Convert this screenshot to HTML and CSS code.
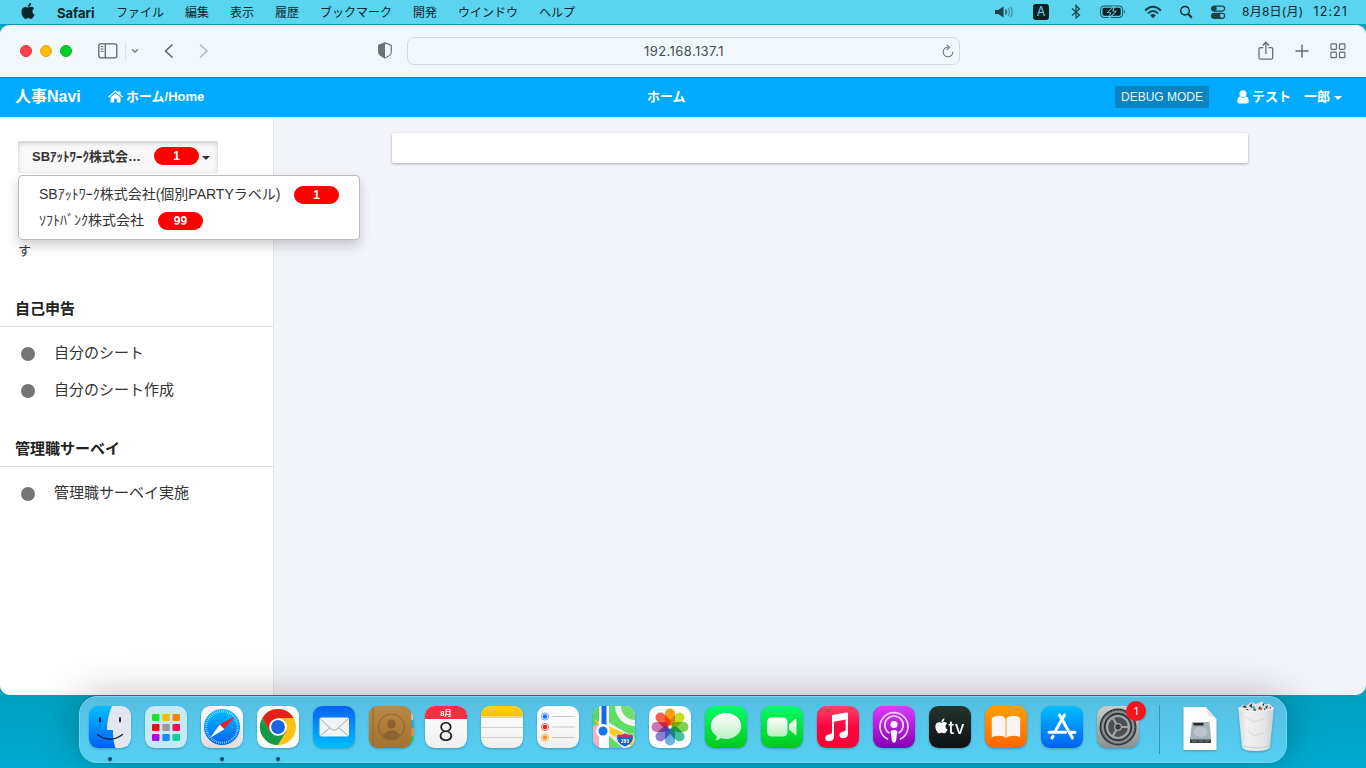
FILE: index.html
```html
<!DOCTYPE html>
<html lang="ja">
<head>
<meta charset="utf-8">
<title>ホーム</title>
<link rel="stylesheet" href="styles.css">
</head>
<body>
<svg class="defs" width="0" height="0">
  <defs>
    <linearGradient id="blue" x2="0" y2="1"><stop stop-color="#00bfff"/><stop offset="1" stop-color="#0060f4"/></linearGradient>
    <linearGradient id="mail" x2="0" y2="1"><stop stop-color="#0862f5"/><stop offset="1" stop-color="#00bdfd"/></linearGradient>
    <linearGradient id="green" x2="0" y2="1"><stop stop-color="#04fb68"/><stop offset="1" stop-color="#04c91c"/></linearGradient>
    <linearGradient id="light" x2="0" y2="1"><stop stop-color="#fff"/><stop offset="1" stop-color="#dcdcde"/></linearGradient>
    <linearGradient id="paper" x2="0" y2="1"><stop stop-color="#fff"/><stop offset="1" stop-color="#f0efee"/></linearGradient>
    <linearGradient id="bubble" x2="0" y2="1"><stop stop-color="#fff"/><stop offset="1" stop-color="#b9efc0"/></linearGradient>
    <linearGradient id="music" x2="0" y2="1"><stop stop-color="#fb4467"/><stop offset=".5" stop-color="#fc0440"/><stop offset="1" stop-color="#fc0034"/></linearGradient>
    <linearGradient id="purple" x2="0" y2="1"><stop stop-color="#dc3afb"/><stop offset="1" stop-color="#8400b4"/></linearGradient>
    <linearGradient id="black" x2="0" y2="1"><stop stop-color="#24352f"/><stop offset="1" stop-color="#0c1114"/></linearGradient>
    <linearGradient id="orange" x2="0" y2="1"><stop stop-color="#ff9f00"/><stop offset="1" stop-color="#ff6500"/></linearGradient>
    <linearGradient id="brown" x2="0" y2="1"><stop stop-color="#b98943"/><stop offset="1" stop-color="#a37131"/></linearGradient>
    <linearGradient id="steel" x2="0" y2="1"><stop stop-color="#c9cdce"/><stop offset="1" stop-color="#8c8f91"/></linearGradient>
    <linearGradient id="yellow" x2="0" y2="1"><stop stop-color="#ffd60a"/><stop offset="1" stop-color="#f8bd00"/></linearGradient>
    <linearGradient id="bin" x2="1" y2="0"><stop stop-color="#d3d8da"/><stop offset=".25" stop-color="#f1f1f2"/><stop offset=".75" stop-color="#e4e3e5"/><stop offset="1" stop-color="#c7ced2"/></linearGradient>
    <clipPath id="tile"><rect width="42" height="42" rx="9.500"/></clipPath>
    <path id="apple" d="M12.152 6.896c-.948 0-2.415-1.078-3.96-1.04-2.04.027-3.91 1.183-4.961 3.014-2.117 3.675-.546 9.103 1.519 12.09 1.013 1.454 2.208 3.09 3.792 3.039 1.52-.065 2.09-.987 3.935-.987 1.831 0 2.35.987 3.96.948 1.637-.026 2.676-1.48 3.676-2.948 1.156-1.688 1.636-3.325 1.662-3.415-.039-.013-3.182-1.221-3.22-4.857-.026-3.04 2.48-4.494 2.597-4.559-1.429-2.09-3.623-2.324-4.39-2.376-2-.156-3.675 1.09-4.61 1.09zM15.53 3.83c.843-1.012 1.4-2.427 1.245-3.83-1.207.052-2.662.805-3.532 1.818-.78.896-1.454 2.338-1.273 3.714 1.338.104 2.715-.688 3.559-1.701"/>
  </defs>
</svg>

<header class="menubar">
  <svg class="apple" width="16" height="16" viewBox="0 0 24 24"><use href="#apple"/></svg>
  <nav class="menus">
    <b class="app">Safari</b><span>ファイル</span><span>編集</span><span>表示</span><span>履歴</span><span>ブックマーク</span><span>開発</span><span>ウインドウ</span><span>ヘルプ</span>
  </nav>
  <div class="status">
    <svg width="20" height="16" viewBox="0 0 20 16"><path fill="#1d424a" d="M1 6h3.300L9.500 2.500v11L4.300 10H1z"/><g fill="none" stroke="#1d424a" stroke-width="1.200"><path d="M11.500 5.500q1.700 2.500 0 5"/><path opacity=".5" d="M14 4q2.700 4 0 8M16.500 2.700q3.400 5.300 0 10.600"/></g></svg>
    <span class="ime">A</span>
    <svg width="10" height="16" viewBox="0 0 10 16"><path fill="none" stroke="#1d424a" stroke-width="1.200" d="M1 4.500l7.500 6.500L5 14V1.500L8.500 5 1 11.500"/></svg>
    <svg width="26" height="14" viewBox="0 0 26 14"><rect x=".6" y="1" width="22" height="11.500" rx="3.300" fill="none" stroke="#1d525c"/><rect x="2.500" y="2.800" width="18.200" height="8" rx="1.800" fill="#0d2025"/><path d="M24 5q2 1.700 0 3.500z" fill="#1d525c"/><path fill="#5ad4ef" d="M13.500 1L6.300 7.900h3.600L8.700 13h1.500l7-7.200h-3.700L15 1z"/><path fill="#0d2025" d="M13.300 2.200L8 7.200h3.200L10 11.500l5.500-5h-3.300z"/></svg>
    <svg width="18" height="14" viewBox="0 0 18 14"><g fill="none" stroke="#123a42" stroke-width="1.900"><path d="M1.200 5.500q7.800-7.500 15.600 0M4 8.400q5-4.800 10 0"/></g><path fill="#123a42" d="M6.200 10.200q2.800-2.500 5.600 0L9 13.200z"/></svg>
    <svg width="14" height="14" viewBox="0 0 14 14"><g fill="none" stroke="#10292f" stroke-width="1.500"><circle cx="6" cy="5.700" r="4.300"/><path d="M9.200 9l3.600 3.800" stroke-width="2"/></g></svg>
    <svg width="16" height="16" viewBox="0 0 16 16"><rect x="1.600" y="2.100" width="13" height="5" rx="2.500" fill="none" stroke="#1d424a" stroke-width="1.200"/><circle cx="4.200" cy="4.600" r="2.500" fill="#1d424a"/><rect x="1" y="8.700" width="14.200" height="6.300" rx="3.150" fill="#1d424a"/><circle cx="12" cy="11.850" r="2" fill="#5ad4ef"/></svg>
    <time class="clock"><span class="date">8月8日(月)</span><span class="hour">12:21</span></time>
  </div>
</header>

<main class="window">
  <div class="toolbar">
    <div class="lights"><i class="red"></i><i class="amber"></i><i class="green"></i></div>
    <svg class="panel" width="20" height="16" viewBox="0 0 20 16" fill="none" stroke="#5f6668" stroke-width="1.300"><rect x=".8" y=".8" width="18" height="14" rx="2"/><path d="M7.300 1v14"/><path d="M2.700 3.600h2.600M2.700 6h2.600M2.700 8.400h2.600" stroke-width="1"/></svg>
    <i class="rule"></i>
    <svg class="drop" width="8" height="6" viewBox="0 0 8 6" fill="none" stroke="#767d80" stroke-width="1.400"><path d="M1 1.300l3 2.800 3-2.800"/></svg>
    <svg class="back" width="10" height="16" viewBox="0 0 10 16" fill="none" stroke="#5f6668" stroke-width="1.600"><path d="M8.500 1.500L1.500 8l7 6.500"/></svg>
    <svg class="next" width="10" height="16" viewBox="0 0 10 16" fill="none" stroke="#b6bcbf" stroke-width="1.600"><path d="M1 1.500L8 8l-7 6.500"/></svg>
    <svg class="shield" width="14" height="17" viewBox="0 0 14 17"><path d="M7 .9l5.800 2.200q.5.200.5.700v6.500Q13 13.500 7 16 1 13.500.700 10.300V3.800q0-.5.500-.700z" fill="none" stroke="#6b7274" stroke-width="1.200"/><path d="M7 .7v15.500Q1 13.500.700 10.300V3.500z" fill="#6b7274"/></svg>
    <div class="address"><span>192.168.137.1</span><svg width="12" height="14" viewBox="0 0 12 14" fill="none" stroke="#6f7679" stroke-width="1.100"><path d="M10.800 7.800A4.800 4.800 0 1 1 6.300 3.200M4.700.8L7.500 3.300 4.700 6"/></svg></div>
    <div class="tools">
      <svg width="16" height="20" viewBox="0 0 16 20" fill="none" stroke="#666d70" stroke-width="1.300"><path d="M5.300 6.600H2.500q-1.500 0-1.500 1.500v8.600q0 1.500 1.500 1.500h10.700q1.500 0 1.500-1.500V8.100q0-1.500-1.500-1.500h-2.700M7.900 13V1.500M4.800 4.500l3.100-3.200L11 4.500"/></svg>
      <svg width="14" height="14" viewBox="0 0 14 14" stroke="#666d70" stroke-width="1.500"><path d="M7 .5v13M.5 7h13"/></svg>
      <svg width="16" height="16" viewBox="0 0 16 16" fill="none" stroke="#666d70" stroke-width="1.200"><rect x=".9" y=".9" width="5.500" height="5.500" rx=".8"/><rect x="9.400" y=".9" width="5.500" height="5.500" rx=".8"/><rect x=".9" y="9.200" width="5.500" height="5.500" rx=".8"/><rect x="9.400" y="9.200" width="5.500" height="5.500" rx=".8"/></svg>
    </div>
  </div>

  <nav class="navbar">
    <div class="nav-left">
      <b class="brand">人事Navi</b>
      <svg width="15" height="13" viewBox="0 0 15 13" fill="#fff"><path d="M7.500 3.200l5 4.200v4.400q0 .6-.6.600H8.800V8.800H6.200v3.600H3.100q-.6 0-.6-.6V7.400z"/><path d="M7.500.3L10.500 2.800V1.200h2v3.300L15 6.700l-.8.900-6.700-5.700L.8 7.600 0 6.700z"/></svg>
      <b class="home">ホーム/Home</b>
    </div>
    <b class="title">ホーム</b>
    <div class="nav-right">
      <span class="debug">DEBUG MODE</span>
      <svg width="12" height="14" viewBox="0 0 12 14" fill="#fff"><circle cx="6" cy="3.800" r="3.500"/><path d="M3 6.500Q6 9.100 9 6.500 11.700 7 11.700 11.500q0 2-2 2H2.300q-2 0-2-2Q.3 7 3 6.500z"/></svg>
      <b class="user">テスト　一郎</b><i class="caret"></i>
    </div>
  </nav>

  <div class="body">
    <aside class="sidebar">
      <div class="switcher">
        <button class="company"><span>SBｱｯﾄﾜｰｸ株式会…</span><em class="pill">1</em><i class="caret"></i></button>
        <ul class="menu">
          <li><span class="name-a">SBｱｯﾄﾜｰｸ株式会社(個別PARTYラベル)</span><em class="pill">1</em></li>
          <li><span class="name-b">ｿﾌﾄﾊﾞﾝｸ株式会社</span><em class="pill">99</em></li>
        </ul>
      </div>
      <i class="mark"></i>
      <p class="tail">す</p>
      <h2>自己申告</h2>
      <ul class="links"><li>自分のシート</li><li>自分のシート作成</li></ul>
      <h2>管理職サーベイ</h2>
      <ul class="links"><li>管理職サーベイ実施</li></ul>
    </aside>
    <section class="content"><div class="card"></div></section>
  </div>
</main>

<footer class="dock">
  <div class="icon running"><svg viewBox="0 0 42 42"><g clip-path="url(#tile)"><rect width="42" height="42" fill="url(#blue)"/><path d="M23 0Q18 11 18 24h6q-.3 10 2.500 18H42V0z" fill="#e4e6ef"/></g><path d="M11 12v3.500M31 12v3.500" stroke="#123" stroke-width="1.800" stroke-linecap="round"/><path d="M8.500 28.500q12.500 9.500 25 0" fill="none" stroke="#122a42" stroke-width="1.500" stroke-linecap="round"/></svg></div>
  <div class="icon"><svg viewBox="0 0 42 42"><rect width="42" height="42" rx="9.500" fill="#c5eaf6"/><g><rect x="7" y="8" width="7.500" height="7" rx="1.300" fill="#1de423"/><rect x="17.300" y="8" width="7.500" height="7" rx="1.300" fill="#fcb900"/><rect x="27.500" y="8" width="7.500" height="7" rx="1.300" fill="#fa8200"/><rect x="7" y="18" width="7.500" height="7" rx="1.300" fill="#f20a18"/><rect x="17.300" y="18" width="7.500" height="7" rx="1.300" fill="#949aa0"/><rect x="27.500" y="18" width="7.500" height="7" rx="1.300" fill="#fb0b57"/><rect x="7" y="28" width="7.500" height="7" rx="1.300" fill="#a90be8"/><rect x="17.300" y="28" width="7.500" height="7" rx="1.300" fill="#128ffb"/><rect x="27.500" y="28" width="7.500" height="7" rx="1.300" fill="#11d09a"/></g></svg></div>
  <div class="icon running"><svg viewBox="0 0 42 42"><rect width="42" height="42" rx="9.500" fill="url(#light)"/><circle cx="21" cy="21" r="18" fill="url(#blue)"/><circle cx="21" cy="21" r="15.700" fill="none" stroke="#e6f6ff" stroke-width="2.200" stroke-dasharray=".6 1.370"/><path d="M34 10.500L18.800 18.500 23.300 23.300z" fill="#f21c2a"/><path d="M9 32l9.800-13.500 4.500 4.800z" fill="#fff"/></svg></div>
  <div class="icon running"><svg viewBox="0 0 42 42"><rect width="42" height="42" rx="9.500" fill="#fcfdfd"/><circle cx="21" cy="21" r="18" fill="#fcc010"/><path fill="#129a48" d="M5.400 12A18 18 0 0 0 21 39L28.800 25.500 21 21l-7.800 4.500z"/><path fill="#e3211c" d="M5.400 12A18 18 0 0 1 36.600 12H21v9l-7.800 4.500z"/><circle cx="21" cy="21" r="8.800" fill="#fff"/><circle cx="21" cy="21" r="6.900" fill="#1766e4"/></svg></div>
  <div class="icon"><svg viewBox="0 0 42 42"><rect width="42" height="42" rx="9.500" fill="url(#mail)"/><rect x="6.500" y="11.500" width="29.500" height="19" rx="2" fill="#f0f2f4"/><path d="M7.500 13l11.200 10.300q2.500 2 5 0L35 13M7.500 29.500L17 21.800M35 29.500l-9.500-7.700" fill="none" stroke="#a3abb2"/></svg></div>
  <div class="icon"><svg viewBox="0 0 42 42"><path d="M36 6h5.500q2.500 1 2.500 4v4h-8z" fill="#d3d2c5"/><path d="M37 14h7.500v8H37z" fill="#26a7dc"/><path d="M37 22h7.500v8H37z" fill="#f28c28"/><path d="M37 30h7.500q0 6-3.500 8h-4z" fill="#26c84d"/><rect width="42.500" height="42" rx="9" fill="url(#brown)"/><path d="M4 1.500v39" stroke="#98692c" stroke-width="1"/><circle cx="22.500" cy="21" r="13" fill="none" stroke="#8c6330" stroke-width="1"/><circle cx="22.500" cy="18" r="4.500" fill="#8c6330"/><path d="M13.300 29.500q9.200-10.500 18.400 0-9.200 8.500-18.400 0z" fill="#8c6330"/></svg></div>
  <div class="icon"><svg viewBox="0 0 42 42"><g clip-path="url(#tile)"><rect width="42" height="42" fill="url(#paper)"/><path d="M0 0h42v13H0z" fill="#f72e40"/></g><text class="month" x="21" y="10" text-anchor="middle">8月</text><text class="day" x="21" y="35" text-anchor="middle">8</text></svg></div>
  <div class="icon"><svg viewBox="0 0 42 42"><g clip-path="url(#tile)"><rect width="42" height="42" fill="url(#paper)"/><path d="M0 0h42v10.500H0z" fill="url(#yellow)"/><path d="M0 11.500h42M0 21.500h42M0 31.500h42" stroke="#ccc8c8" stroke-width=".8"/></g></svg></div>
  <div class="icon"><svg viewBox="0 0 42 42"><rect width="42" height="42" rx="9.500" fill="url(#paper)"/><path d="M15.500 10.500h22M15.500 21h22M15.500 31.500h22" stroke="#c8c8c9"/><g stroke-width=".9" stroke-opacity=".7"><circle cx="8" cy="10.500" r="3.600" fill="none" stroke="#176dfb"/><circle cx="8" cy="10.500" r="2.300" fill="#176dfb"/><circle cx="8" cy="21" r="3.600" fill="none" stroke="#f21b20"/><circle cx="8" cy="21" r="2.300" fill="#f21b20"/><circle cx="8" cy="31.500" r="3.600" fill="none" stroke="#f99417"/><circle cx="8" cy="31.500" r="2.300" fill="#f99417"/></g></svg></div>
  <div class="icon"><svg viewBox="0 0 42 42"><g clip-path="url(#tile)"><rect width="42" height="42" fill="#f1f2ee"/><path d="M15 0h27v32L15 16z" fill="#5ddf62"/><path d="M0 5l6-5v20H0z" fill="#56d85a"/><path d="M0 20l6-2v24H0z" fill="#f5acc5"/><circle cx="42" cy="0" r="20" fill="#f3f4f2"/><circle cx="42" cy="0" r="14" fill="#6fdf70"/><path d="M0 13L42 32v10L12 25z" fill="#fdc923"/><path d="M16 30l14 12H16z" fill="#68d568"/><path d="M6 0h10v42H6z" fill="#fff"/><path d="M11 0v25" stroke="#1468e6" stroke-width="5"/></g><circle cx="10" cy="25" r="7" fill="#fff"/><circle cx="10" cy="25" r="4.500" fill="#1473f2"/><path d="M24 28q4 1.500 8-1 4 2.500 8 1 2.500 9-8 13-10.500-4-8-13z" fill="#1263c9" stroke="#eaf1f7" stroke-width=".8"/><path d="M25 28.500q4 1 7-1 3 2 7 1v2.200H25z" fill="#e3343d"/><text class="route" x="32" y="36.500" text-anchor="middle">280</text></svg></div>
  <div class="icon"><svg viewBox="0 0 42 42"><rect width="42" height="42" rx="9.500" fill="#fff"/><g class="petals"><rect x="16" y="2.500" width="10" height="17" rx="5" fill="#ff9500"/><rect x="16" y="2.500" width="10" height="17" rx="5" fill="#c9d80b" transform="rotate(45 21 21)"/><rect x="16" y="2.500" width="10" height="17" rx="5" fill="#78cc48" transform="rotate(90 21 21)"/><rect x="16" y="2.500" width="10" height="17" rx="5" fill="#2fbd92" transform="rotate(135 21 21)"/><rect x="16" y="2.500" width="10" height="17" rx="5" fill="#63a8e5" transform="rotate(180 21 21)"/><rect x="16" y="2.500" width="10" height="17" rx="5" fill="#8175cf" transform="rotate(225 21 21)"/><rect x="16" y="2.500" width="10" height="17" rx="5" fill="#c868b2" transform="rotate(270 21 21)"/><rect x="16" y="2.500" width="10" height="17" rx="5" fill="#fb5140" transform="rotate(315 21 21)"/></g></svg></div>
  <div class="icon"><svg viewBox="0 0 42 42"><rect width="42" height="42" rx="9.500" fill="url(#green)"/><path d="M21 7C12.500 7 5.800 12.700 5.800 20q0 6.200 6 10.200 0 2.500-2 4.100 4 0 6.300-2.200Q18.500 33 21 33c8.500 0 15.300-5.700 15.300-13S29.500 7 21 7z" fill="url(#bubble)"/></svg></div>
  <div class="icon"><svg viewBox="0 0 42 42"><rect width="42" height="42" rx="9.500" fill="url(#green)"/><rect x="6" y="11.500" width="20.500" height="19" rx="4.500" fill="url(#bubble)"/><path d="M28 18.500l6-5.200q1.500-1 1.500.7v14q0 1.700-1.500.7l-6-5.200z" fill="url(#bubble)"/></svg></div>
  <div class="icon"><svg viewBox="0 0 42 42"><rect width="42" height="42" rx="9.500" fill="url(#music)"/><path d="M15 10.300q0-1.300 1.300-1.600L29.500 6.500q1.500-.2 1.500 1.200v20q0 4-4.500 4.500-4 .2-4-3 0-3 3.500-3.600 2.700-.4 2.700-2V13.500L17 15.800v15q0 4-4.800 4.500-4 0-4-3.200 0-2.900 3.500-3.500Q15 28 15 26.500z" fill="#fff"/></svg></div>
  <div class="icon"><svg viewBox="0 0 42 42"><rect width="42" height="42" rx="9.500" fill="url(#purple)"/><g fill="none" stroke="#f4d6fb" stroke-width="1.700"><path d="M15 33.300a14 14 0 1 1 12 0M16.500 27.200a9.200 9.200 0 1 1 9 0"/></g><circle cx="21" cy="18.500" r="3.500" fill="#fff"/><path d="M17.700 25q3.300-2.200 6.600 0l-1.200 10q-2.100 3.400-4.200 0z" fill="#fff"/></svg></div>
  <div class="icon"><svg viewBox="0 0 42 42"><rect width="42" height="42" rx="9.500" fill="url(#black)"/><use href="#apple" transform="translate(5 12.500) scale(.62)" fill="#fff"/><text class="tv" x="19.500" y="27.500">tv</text></svg></div>
  <div class="icon"><svg viewBox="0 0 42 42"><rect width="42" height="42" rx="9.500" fill="url(#orange)"/><path d="M20.600 13Q19 9.800 13.500 9.800 9 9.800 6.800 12v19.500q2-1.700 6.500-1.700 5.500 0 7.300 2.400zM21.400 13Q23 9.800 28.500 9.800 33 9.800 35.200 12v19.500q-2-1.700-6.500-1.700-5.500 0-7.300 2.400z" fill="#f8f5f2"/></svg></div>
  <div class="icon"><svg viewBox="0 0 42 42"><rect width="42" height="42" rx="9.500" fill="url(#blue)"/><g stroke="#fff" stroke-width="3" stroke-linecap="round"><path d="M23.500 9L14 25.500M18.500 9L31.500 32M8 26.200h16.500M29.500 26.200H34M12 30.200L11 32"/></g></svg></div>
  <div class="icon"><svg viewBox="0 0 42 42"><rect width="42" height="42" rx="9.500" fill="url(#steel)"/><circle cx="21" cy="21" r="18.500" fill="#2e3335"/><circle cx="21" cy="21" r="15.300" fill="#62676a" stroke="#8f9395" stroke-width="1.800"/><circle cx="21" cy="21" r="16.700" fill="none" stroke="#8f9395" stroke-width="1" stroke-dasharray="1 .8"/><circle cx="21" cy="21" r="13.500" fill="#4b5052" stroke="#24282a"/><circle cx="21" cy="21" r="11" fill="none" stroke="#a3a7a9" stroke-width="2.200"/><path d="M21 21h11M21 21L15.500 11.500M21 21l-5.500 9.500" stroke="#a4a7a9" stroke-width="2.200"/><circle cx="21" cy="21" r="3.300" fill="#353a3d" stroke="#a4a7a9" stroke-width="1.300"/></svg><span class="badge">1</span></div>
  <i class="divider"></i>
  <div class="icon file"><svg viewBox="0 0 42 42"><path d="M4.500 1h22L37.500 13v31h-33z" fill="#fdfdfd"/><path d="M26.500 1v0q2.500 1.500 2 5.500-.2 2.500 2 3.500 4 .5 7 3z" fill="#e4e7e9"/><path d="M13 16h17.500l1.500 16v5H11v-5z" fill="#a4b2b9"/><path d="M11 33.500h21V37H11z" fill="#343a3e"/><path d="M14.500 17h10v2.500h-10z" fill="#22282b"/><ellipse cx="21.500" cy="26" rx="7" ry="5" fill="#b9c5ca"/><path d="M13 35.200h17" stroke="#7b868b" stroke-dasharray="5 1.500"/></svg></div>
  <div class="icon trash"><svg viewBox="0 0 42 42"><path d="M3 1.500h36L35 41q-1 4-14 4T7 41z" fill="url(#bin)"/><path d="M4 2l4-3.500 4 1 4-3.500 5 2 6-2.500 3 3 4-1 4.500 4.500q-17.500 7.500-34.500 0z" fill="#e1e3e3"/><path d="M7 1l3-2 2 3zM14 0l3-3v5zM30 1l3-2-1 4zM23 3l2-3 2 4zM18 4l2-2 1 3zM9 4l4-1 1 2zM27-1l2-2v3zM34 2l2-1v2z" fill="#34383b"/><path d="M16 1l4-1-1 3z" fill="#21b3a0"/><path d="M25 1l3 1-3 2z" fill="#d2682d"/><path d="M29 2l2 1-2 2z" fill="#2c58a8"/><path d="M3 2q18 7.500 36 0" stroke="#f5f7f8" stroke-width="1.200" fill="none"/><path d="M11 11l8 5 11-4M12 24l7 6 10-3" stroke="#d8d8db" fill="none"/><path d="M8 40q13 4 26 0" stroke="#c8cdd0" fill="none"/></svg></div>
</footer>
</body>
</html>
```

FILE: styles.css
```css
* { box-sizing: border-box; }
body {
  margin: 0; width: 1366px; height: 768px; overflow: hidden;
  background: linear-gradient(#00a4c4 0, #009fc0 690px, #00acd2 768px);
  font-family: "Liberation Sans", "Noto Sans CJK JP", sans-serif;
  color: #333;
}
svg { display: block; flex: none; overflow: visible; }
.defs { position: absolute; }
ul { list-style: none; margin: 0; padding: 0; }
i, em { font-style: normal; }

.menubar {
  height: 24px; display: flex; align-items: center; padding: 0 18px 0 20px;
  background: #5ad4ef; color: #0d262c;
  font: 12px/24px Inter, "Noto Sans CJK JP", sans-serif;
}
.apple { margin-top: -2px; fill: #0d262c; }
.menus { display: flex; gap: 21px; margin-left: 21px; padding-top: 1px; white-space: nowrap; }
.app { width: 38px; font-size: 13px; }
.status { display: flex; align-items: center; margin-left: auto; }
.ime { width: 16px; height: 16px; margin: 0 22px 0 19px; border-radius: 3px; background: #0d2025; color: #5ad4ef; text-align: center; font-size: 12.5px; line-height: 16px; }
.status svg:nth-of-type(2) { margin-right: 19px; }
.status svg:nth-of-type(3) { margin-right: 18px; }
.status svg:nth-of-type(4) { margin-right: 17px; }
.status svg:nth-of-type(5) { margin-right: 17px; }
.clock { display: flex; justify-content: space-between; width: 106px; margin-left: 16px; white-space: nowrap; }
.date { letter-spacing: .25px; }
.hour { font-size: 12.5px; letter-spacing: 1.1px; }

.window { height: 671px; overflow: hidden; border-top: 1px solid #0796b5; border-radius: 10px; background: #f3f4fa; }
.toolbar { height: 53px; display: flex; align-items: center; padding: 0 20px; background: #f0f8fc; border-bottom: 1px solid #0c87c8; }
.lights { display: flex; gap: 8px; }
.lights i { width: 12px; height: 12px; border-radius: 50%; border: 1px solid #e5303c; background: #ff424d; }
.lights .amber { background: #ffbd00; border-color: #e0a320; }
.lights .green { background: #00d02b; border-color: #0fae2a; }
.panel { margin-left: 26px; }
.rule { width: 1px; height: 18px; margin-left: 7px; background: #dbe2e6; }
.drop { margin-left: 5px; }
.back { margin-left: 25px; }
.next { margin-left: 25px; }
.shield { margin-left: 169px; }
.address { width: 553px; height: 28px; margin-left: 15px; display: flex; align-items: center; border: 1px solid #d3dadd; border-radius: 7px; font: 13px Inter, sans-serif; letter-spacing: .4px; color: #484d4f; padding-right: 5px; }
.address span { flex: 1; text-align: center; padding: 1px 0 0 18px; }
.tools { display: flex; align-items: center; margin-left: auto; gap: 21px; }
.toolbar > svg, .address, .tools { margin-bottom: 1px; }

.navbar { height: 39px; display: grid; grid-template-columns: 632px auto 1fr; align-items: center; background: #0af; color: #fff; font-size: 13px; white-space: nowrap; padding: 0 24px 2px 15px; }
.nav-left, .nav-right { display: flex; align-items: center; }
.nav-right { justify-content: flex-end; }
.brand { font-size: 16px; width: 93px; }
.home { margin-left: 3px; }
.brand, .home, .title, .user { padding-bottom: 3px; }
.debug { height: 22px; padding: 0 6px; margin-right: 28px; border-radius: 2px; background: #0984c4; color: #e7f6ff; font-size: 12px; line-height: 22px; }
.user { margin-left: 3px; }
.caret { border: 4px solid transparent; border-top-color: currentColor; border-bottom: 0; margin: 2px 0 0 4px; }

.body { height: 578px; display: flex; }
.sidebar { width: 274px; padding-top: 24px; background: #fff; border-right: 1px solid #e2e4ea; }
.switcher { margin-left: 18px; width: 200px; position: relative; }
.company { width: 200px; height: 32px; padding: 0 7px 2px 14px; display: flex; align-items: center; border: 0; border-radius: 2px; background: #f8f8f8; box-shadow: inset 0 2px 5px rgba(0,0,0,.18); font: bold 13px "Liberation Sans", "Noto Sans CJK JP", sans-serif; color: #333; white-space: nowrap; }
.company span { width: 122px; text-align: left; padding-bottom: 2px; }
.company .caret { margin-left: 3px; margin-top: 3px; }
.pill { flex: none; width: 45px; height: 18px; border-radius: 9px; background: #f00; color: #fff; text-align: center; font: bold 12px/18px "Liberation Sans", sans-serif; }
.menu { position: absolute; z-index: 2; top: 34px; left: 0; width: 342px; height: 65px; padding: 5px 20px; border: 1px solid #bbb; border-radius: 4px; background: #fff; box-shadow: 0 6px 12px rgba(0,0,0,.18); font-size: 14px; white-space: nowrap; }
.menu li { height: 26px; display: flex; align-items: center; }
.menu .pill { margin-top: 1px; }
.name-a { width: 255px; margin-top: -2px; }
.name-b { width: 119px; margin-top: -2px; }
.mark { display: block; width: 1px; height: 2px; margin: 24px 0 0 18px; background: #f44; }
.tail { margin: 42px 0 0 18px; font-size: 13px; line-height: 20px; }
.sidebar h2 { margin: 22px 0 0; height: 36px; padding-left: 15px; border-bottom: 1px solid #dcdcdc; font-size: 15px; line-height: 36px; color: #222; }
.tail + h2 { margin-top: 30px; }
.links { padding-top: 7px; }
.links + h2 { margin-top: 23px; }
.links li { height: 37px; display: flex; align-items: center; padding-left: 21px; font-size: 15px; line-height: 37px; }
.links li::before { content: ""; width: 14px; height: 14px; margin: 2px 19px 0 0; border-radius: 50%; background: #757575; }
.content { flex: 1; padding: 16px 118px; }
.card { height: 30px; background: #fff; border-radius: 2px; box-shadow: 0 1px 3px rgba(0,0,0,.3); }

.dock {
  position: relative; width: 1208px; height: 67px; margin: 1px 0 0 79px; padding: 9px 9px 0; display: flex; gap: 14px;
  border-radius: 18px; border: 1px solid #76d5ef; background: linear-gradient(#56bfe2, #54d0f4);
  box-shadow: 0 -1px 0 rgba(0,70,90,.4), 0 0 40px rgba(0,0,0,.27);
}
.icon { position: relative; width: 42px; height: 42px; flex: none; filter: drop-shadow(0 1px 1px rgba(0,0,0,.25)); }
.icon svg { width: 42px; height: 42px; }
.running::after { content: ""; position: absolute; left: 19px; top: 51px; width: 4px; height: 4px; border-radius: 50%; background: #0b5270; }
.divider { flex: none; width: 1px; height: 49px; margin: -1px 5px 0 6px; background: #3596b7; }
.badge { position: absolute; left: 29px; top: -5px; width: 20px; height: 20px; border-radius: 50%; background: #f7151b; color: #fff; font: 11px/20px Inter, sans-serif; text-align: center; }
.month { font: bold 7.5px "Liberation Sans", "Noto Sans CJK JP", sans-serif; fill: #fff; }
.day { font: 300 26px Inter, sans-serif; fill: #222; }
.route { font: bold 5px "Liberation Sans", sans-serif; fill: #fff; }
.tv { font: 500 17px Inter, sans-serif; fill: #fff; }
.petals rect { mix-blend-mode: multiply; opacity: .92; }
```
